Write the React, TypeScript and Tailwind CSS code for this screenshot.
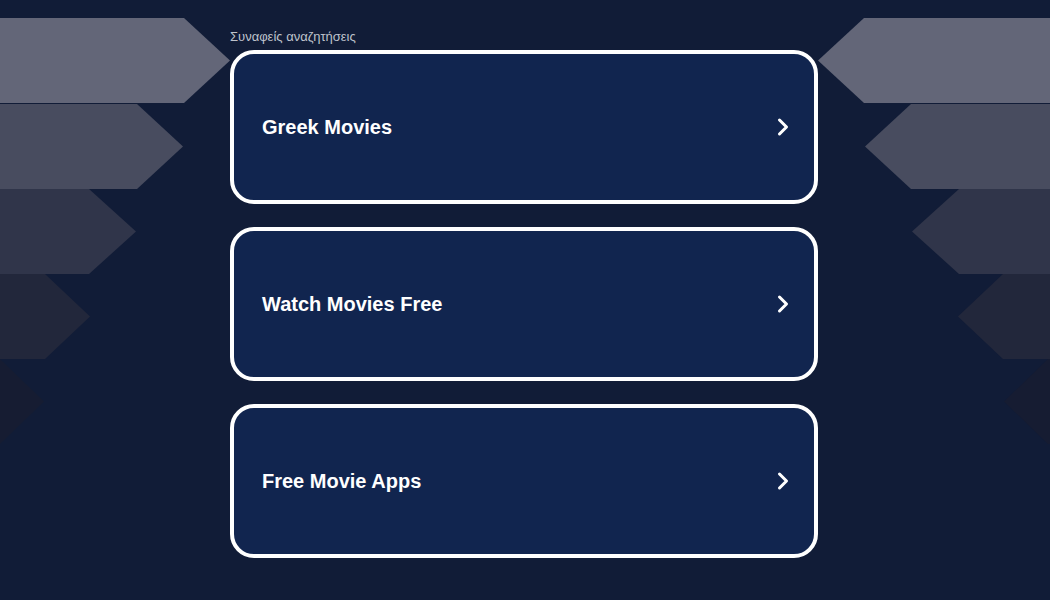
import { ChevronRight } from "lucide-react";

const items = ["Greek Movies", "Watch Movies Free", "Free Movie Apps"];

function Backdrop() {
  // stacked arrow bands on both sides
  const bands = [
    { y: 18, rect: 184, tip: 230, fill: "#636678" },
    { y: 104, rect: 137, tip: 183, fill: "#484c5f" },
    { y: 189, rect: 89, tip: 136, fill: "#30354a" },
    { y: 274, rect: 45, tip: 90, fill: "#22273b" },
    { y: 359, rect: 0, tip: 44, fill: "#161c32" },
  ];
  return (
    <svg className="absolute inset-0 h-full w-full" viewBox="0 0 1050 600" preserveAspectRatio="none">
      {bands.map((b, i) => {
        const h = 85;
        const mid = b.y + h / 2;
        const r = 1048;
        return (
          <g key={i}>
            <polygon points={`0,${b.y} ${b.rect},${b.y} ${b.tip},${mid} ${b.rect},${b.y + h} 0,${b.y + h}`} fill={b.fill} />
            <polygon
              points={`1050,${b.y} ${r - b.rect},${b.y} ${r - b.tip},${mid} ${r - b.rect},${b.y + h} 1050,${b.y + h}`}
              fill={b.fill}
            />
          </g>
        );
      })}
    </svg>
  );
}

export default function App() {
  return (
    <div className="relative h-[600px] w-[1050px] overflow-hidden bg-[#111c37] font-['Liberation_Sans',Arial,sans-serif]">
      <Backdrop />
      <div className="relative ml-[230px] w-[588px] pt-[29px]">
        <div className="mb-[5px] text-[13px] leading-4 text-[#bfc3cc]">Συναφείς αναζητήσεις</div>
        <div className="flex flex-col gap-[23px]">
          {items.map((t) => (
            <div
              key={t}
              className="flex h-[154px] items-center justify-between rounded-[24px] border-4 border-white bg-[#11254f] pl-[28px] pr-[17px]"
            >
              <span className="text-[20px] font-bold text-white">{t}</span>
              <ChevronRight className="h-[28px] w-[28px] text-white" strokeWidth={2.6} />
            </div>
          ))}
        </div>
      </div>
    </div>
  );
}
